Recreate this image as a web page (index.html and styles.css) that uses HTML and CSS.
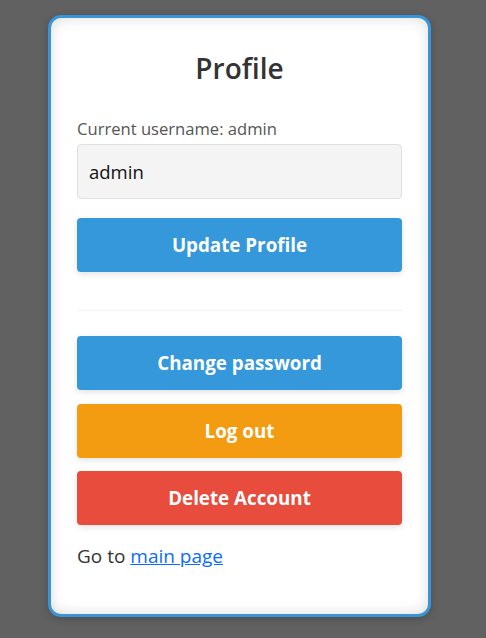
FILE: index.html
```html
<!DOCTYPE html>
<html>
<head>
<meta charset="utf-8">
<link rel="stylesheet" href="styles.css">
</head>
<body>
<div class="card">
  <h1 class="title">Profile</h1>
  <form class="form">
    <label class="label">Current username: admin</label>
    <input class="input" type="text" value="admin">
    <button class="btn btn-blue" type="button">Update Profile</button>
  </form>
  <hr class="divider">
  <div class="actions">
    <button class="btn btn-blue" type="button">Change password</button>
    <button class="btn btn-orange" type="button">Log out</button>
    <button class="btn btn-red" type="button">Delete Account</button>
  </div>
  <p class="goto">Go to <a href="#" class="link">main page</a></p>
</div>
</body>
</html>
```
FILE: styles.css
```css
html, body {
  margin: 0;
  padding: 0;
  background: #606160;
  height: 100%;
}
body {
  font-family: "Open Sans", "Noto Sans", sans-serif;
  padding: 15px 0 0 48px;
  box-sizing: border-box;
}
.card {
  width: 383px;
  height: 602px;
  box-sizing: border-box;
  border: 3px solid #3a94d6;
  border-radius: 13px;
  background: #fff;
  box-shadow: inset 0 0 14px rgba(0,0,0,0.14), 0 2px 8px rgba(0,0,0,0.2);
  padding: 0 26px;
}
.title {
  margin: 30px 0 0;
  text-align: center;
  font-size: 28px;
  font-weight: 600;
  color: #333;
  line-height: 40px;
}
.form {
  display: flex;
  flex-direction: column;
  margin-top: 31px;
}
.label {
  font-size: 16.6px;
  color: #555;
  line-height: 20px;
}
.input {
  margin-top: 5px;
  height: 55px;
  box-sizing: border-box;
  border: 1px solid #e0e0e0;
  border-radius: 4px;
  background: #f4f4f4;
  font-family: inherit;
  font-size: 18.5px;
  color: #111;
  padding: 0 11px;
}
.btn {
  height: 54px;
  border: none;
  border-radius: 4px;
  color: #fff;
  font-family: inherit;
  font-size: 18.8px;
  font-weight: 700;
  box-shadow: 0 2px 6px rgba(0,0,0,0.12);
  width: 100%;
}
.form .btn { margin-top: 19px; }
.btn-blue { background: #3498db; }
.btn-orange { background: #f39c12; }
.btn-red { background: #e74c3c; }
.divider {
  border: none;
  border-top: 1px solid #f2f2f2;
  margin: 38px 0 0;
}
.actions {
  display: flex;
  flex-direction: column;
  gap: 13.5px;
  margin-top: 25px;
}
.goto {
  margin: 18px 0 0;
  font-size: 19px;
  color: #333;
}
.link { color: #0a6cff; }
```
